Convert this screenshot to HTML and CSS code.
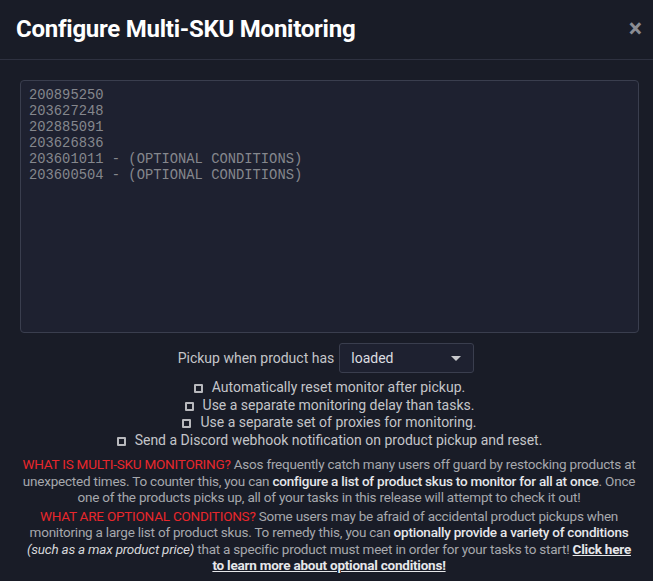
FILE: index.html
```html
<!DOCTYPE html>
<html lang="en">
  <head>
    <meta charset="UTF-8">
    <meta name="viewport" content="width=device-width, initial-scale=1.0">
    <title>Configure Multi-SKU Monitoring</title>
    <link rel="stylesheet" href="styles.css">
  </head>
  <body>
    <div class="modal">
      <div class="modal-header">
        <h1>Configure Multi-SKU Monitoring</h1>
        <span class="close">&times;</span>
      </div>
      <div class="modal-body">
        <textarea class="sku-list" spellcheck="false">200895250
203627248
202885091
203626836
203601011 - (OPTIONAL CONDITIONS)
203600504 - (OPTIONAL CONDITIONS)</textarea>
        <div class="pickup-row">
          <label for="pickupSelect">Pickup when product has</label>
          <div class="select-box" id="pickupSelect">
            <span>loaded</span>
            <span class="caret"></span>
          </div>
        </div>
        <div class="options">
          <label class="option"><span class="check"></span>Automatically reset monitor after pickup.</label>
          <label class="option"><span class="check"></span>Use a separate monitoring delay than tasks.</label>
          <label class="option"><span class="check"></span>Use a separate set of proxies for monitoring.</label>
          <label class="option"><span class="check"></span>Send a Discord webhook notification on product pickup and reset.</label>
        </div>
        <p class="info">
          <span class="red">WHAT IS MULTI-SKU MONITORING?</span> Asos frequently catch many users off guard by restocking products at unexpected times. To counter this, you can <b>configure a list of product skus to monitor for all at once</b>. Once one of the products picks up, all of your tasks in this release will attempt to check it out!
        </p>
        <p class="info second">
          <span class="red">WHAT ARE OPTIONAL CONDITIONS?</span> Some users may be afraid of accidental product pickups when monitoring a large list of product skus. To remedy this, you can <b>optionally provide a variety of conditions</b> <i>(such as a max product price)</i> that a specific product must meet in order for your tasks to start! <a href="#">Click here to learn more about optional conditions!</a>
        </p>
      </div>
    </div>
  </body>
</html>
```

FILE: styles.css
```css
:root {
  --bg: #191c27;
  --field-bg: #1e2130;
  --border: #3a3e4e;
  --text: #a6a8ad;
  --light: #e6e7ea;
  --red: #e8272c;
}

* {
  box-sizing: border-box;
}

body {
  margin: 0;
  background: var(--bg);
  font-family: Roboto, "Liberation Sans", sans-serif;
  color: var(--text);
}

.modal {
  width: 653px;
  height: 581px;
  overflow: hidden;
}

.modal-header {
  display: flex;
  align-items: center;
  justify-content: space-between;
  height: 60px;
  padding: 0 11px 2px 16px;
  border-bottom: 1px solid #2e3140;
}

h1 {
  margin: 0;
  font-size: 24px;
  font-weight: 700;
  color: #ffffff;
  letter-spacing: -0.25px;
}

.close {
  font-size: 25px;
  font-weight: 700;
  color: #8a8c93;
  line-height: 1;
}

.modal-body {
  padding: 20px 14px 0 20px;
}

.sku-list {
  display: block;
  width: 619px;
  height: 253px;
  margin: 0;
  padding: 7px 8px;
  background: var(--field-bg);
  border: 1px solid var(--border);
  border-radius: 4px;
  color: #85878d;
  font-family: "Liberation Mono", monospace;
  font-size: 13.8px;
  line-height: 16px;
  resize: none;
  outline: none;
}

.pickup-row {
  display: flex;
  justify-content: center;
  align-items: center;
  gap: 5px;
  margin-top: 10px;
  padding-right: 7px;
  font-size: 14px;
  color: #c4c5c9;
}

.select-box {
  display: flex;
  align-items: center;
  justify-content: space-between;
  width: 135px;
  height: 30px;
  padding: 0 12px 0 11px;
  background: var(--field-bg);
  border: 1px solid var(--border);
  border-radius: 3px;
  color: #dcdde0;
}

.caret {
  width: 0;
  height: 0;
  border-left: 5px solid transparent;
  border-right: 5px solid transparent;
  border-top: 5px solid #c8c9cc;
}

.options {
  display: flex;
  flex-direction: column;
  align-items: center;
  margin-top: 6px;
  font-size: 14px;
  line-height: 17.5px;
  color: #c4c5c9;
}

.check {
  display: inline-block;
  width: 9px;
  height: 9px;
  margin-right: 9px;
  border: 2px solid #b8b9bd;
  border-radius: 1px;
  vertical-align: -1px;
}

.info {
  margin: 7px 0 0;
  padding: 0 1px 0 0;
  text-align: center;
  font-size: 13.5px;
  line-height: 16.5px;
  letter-spacing: -0.22px;
}

.info.second {
  margin-top: 2px;
}

.info b {
  font-weight: 500;
  color: var(--light);
}

.info i {
  color: #d6d7da;
}

.red {
  color: var(--red);
}

.info a {
  color: var(--light);
  font-weight: 700;
}
```
